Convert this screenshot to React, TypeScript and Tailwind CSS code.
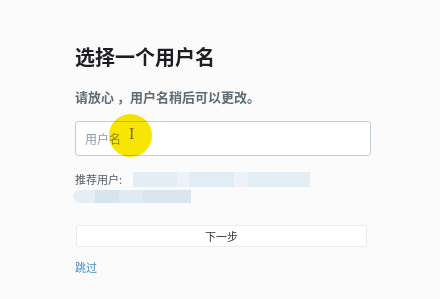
import React from "react";

const FONT = { fontFamily: '"Noto Sans CJK SC", "Noto Sans", sans-serif' };

export default function App() {
  return (
    <div className="min-h-[299px] w-[440px] bg-[#fbfbfb]" style={FONT}>
      <div className="flex w-[296px] flex-col pl-[75px] pt-[42px] box-content">
        <h1 className="text-[20px] font-bold leading-[30px] text-[#1c1e21]">选择一个用户名</h1>
        <p className="mt-[16px] text-[13px] font-bold leading-[18px] text-[#5f6b75]">
          请放心 ，用户名稍后可以更改。
        </p>

        <div className="relative mt-[15px]">
          <div className="flex h-[35px] items-center rounded-[3px] border border-[#c3ced8] bg-white px-[9px]">
            <span className="text-[12px] leading-none text-[#8c99a4]">用户名</span>
          </div>
          {/* pointer highlight */}
          <div className="pointer-events-none absolute left-[34px] top-[-7px] h-[43px] w-[43px] rounded-full bg-[#f8e600] mix-blend-multiply" />
          <span
            className="pointer-events-none absolute left-[54px] top-[3px] text-[16px] leading-[20px] text-[#6b6b50]"
            style={{ fontFamily: '"Liberation Serif", serif' }}
          >
            I
          </span>
        </div>

        <div className="mt-[16px] flex items-center">
          <span className="text-[11px] leading-[15px] text-[#555b60]">推荐用户:</span>
          <div className="ml-[11px] flex h-[15px] w-[177px]">
            <div className="w-[44px] bg-[#e3edf5]" />
            <div className="w-[12px] bg-[#edf3f8]" />
            <div className="w-[45px] bg-[#e2ecf4]" />
            <div className="w-[14px] bg-[#ecf2f7]" />
            <div className="w-[62px] bg-[#e4eef5]" />
          </div>
        </div>
        <div className="mt-[3px] ml-[-2px] flex h-[13px] w-[118px]">
          <div className="w-[22px] rounded-l-full bg-[#e6eef4]" />
          <div className="w-[24px] bg-[#d6e4ee]" />
          <div className="w-[24px] bg-[#e0eaf2]" />
          <div className="w-[48px] bg-[#d9e6f0]" />
        </div>

        <button className="mt-[22px] ml-[1px] h-[22px] w-[291px] rounded-[2px] border border-[#e9ecee] bg-white text-[11px] text-[#333]">
          下一步
        </button>

        <a className="mt-[13px] text-[11px] leading-[15px] text-[#4a8ec4]">跳过</a>
      </div>
    </div>
  );
}
